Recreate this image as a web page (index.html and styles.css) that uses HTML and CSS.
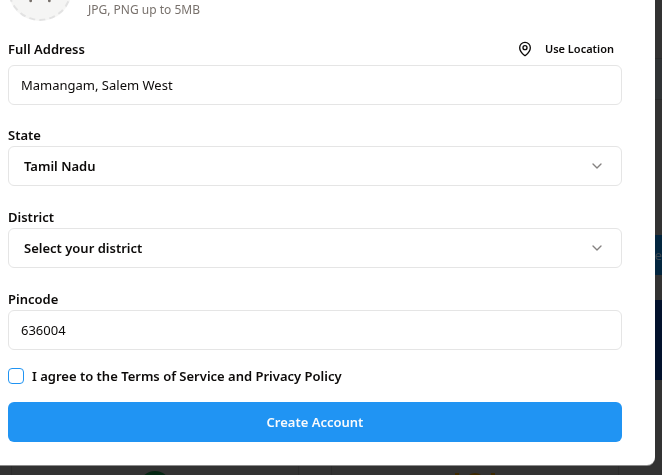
FILE: index.html
```html
<!DOCTYPE html>
<html lang="en">
<head>
<meta charset="utf-8">
<meta name="viewport" content="width=device-width, initial-scale=1">
<title>Create Account</title>
<link rel="stylesheet" href="styles.css">
</head>
<body>
<div class="page" aria-hidden="true">
  <div class="page-rules"></div>
  <div class="page-search">e</div>
  <div class="page-banner"></div>
  <div class="page-strip">
    <div class="card"><span class="dot"></span></div>
    <div class="card"><span class="spark"></span><span class="badge"></span><span class="spark"></span></div>
  </div>
</div>
<div class="overlay">
  <form class="dialog" role="dialog" aria-label="Create Account">
    <div class="photo">
      <div class="avatar">
        <svg width="32" height="32" viewBox="0 0 24 24" fill="none" stroke="currentColor" stroke-width="2" stroke-linecap="round" stroke-linejoin="round"><path d="M19 21v-2a4 4 0 0 0-4-4H9a4 4 0 0 0-4 4v2"/><circle cx="12" cy="7" r="4"/></svg>
      </div>
      <p class="hint">JPG, PNG up to 5MB</p>
    </div>
    <div class="field address">
      <div class="field-head">
        <label for="address">Full Address</label>
        <button type="button" class="locate">
          <svg width="16" height="16" viewBox="0 0 24 24" fill="none" stroke="currentColor" stroke-width="2" stroke-linecap="round" stroke-linejoin="round"><path d="M20 10c0 5-5.500 10.200-7.400 11.800a1 1 0 0 1-1.200 0C9.500 20.200 4 15 4 10a8 8 0 0 1 16 0"/><circle cx="12" cy="10" r="3"/></svg>
          Use Location
        </button>
      </div>
      <input class="control" id="address" type="text" value="Mamangam, Salem West">
    </div>
    <div class="field">
      <label for="state">State</label>
      <div class="select">
        <select class="control" id="state"><option>Tamil Nadu</option></select>
        <svg width="16" height="16" viewBox="0 0 24 24" fill="none" stroke="currentColor" stroke-width="2" stroke-linecap="round" stroke-linejoin="round"><path d="m6 9 6 6 6-6"/></svg>
      </div>
    </div>
    <div class="field">
      <label for="district">District</label>
      <div class="select">
        <select class="control" id="district"><option>Select your district</option></select>
        <svg width="16" height="16" viewBox="0 0 24 24" fill="none" stroke="currentColor" stroke-width="2" stroke-linecap="round" stroke-linejoin="round"><path d="m6 9 6 6 6-6"/></svg>
      </div>
    </div>
    <div class="field">
      <label for="pincode">Pincode</label>
      <input class="control" id="pincode" type="text" inputmode="numeric" value="636004">
    </div>
    <div class="terms">
      <input id="terms" type="checkbox">
      <label for="terms">I agree to the Terms of Service and Privacy Policy</label>
    </div>
    <button type="submit" class="submit">Create Account</button>
  </form>
</div>
</body>
</html>
```
FILE: styles.css
```css
* {
  box-sizing: border-box;
}

body {
  margin: 0;
  background: #323232;
  color: #0c0a09;
  font: 13px/20px "Segoe UI", "Noto Sans", sans-serif;
  overflow: hidden;
}

button,
input,
select {
  margin: 0;
  font: inherit;
  color: inherit;
}

/* Dimmed page behind the dialog */
.page {
  position: fixed;
  inset: 0;
}

.page-rules,
.page-search,
.page-banner {
  position: absolute;
  right: 0;
  width: 16px;
}

.page-rules {
  top: 58px;
  height: 42px;
  border: solid #2a2b2c;
  border-width: 1px 0;
  background: #303335;
}

.page-search {
  top: 235px;
  height: 40px;
  background: #03263f;
  color: #3c464e;
  line-height: 40px;
  text-align: right;
}

.page-banner {
  top: 300px;
  height: 80px;
  background: #03122d;
}

.page-strip {
  position: absolute;
  inset: auto 0 0;
  display: grid;
  grid-template-columns: 1fr 1fr;
  gap: 32px;
  height: 10px;
  padding: 0 43px 0 11px;
  overflow: hidden;
}

.card {
  display: flex;
  justify-content: center;
  height: 64px;
  border: solid #2c2c2c;
  border-width: 0 1px;
}

.dot {
  width: 32px;
  height: 32px;
  margin-top: 6px;
  border-radius: 50%;
  background: #052713;
}

.badge {
  width: 20px;
  height: 20px;
  margin: 8px 6px 0;
  border-radius: 50%;
  background: #3d2900;
}

.spark {
  width: 4px;
  height: 4px;
  margin-top: 8px;
  background: #3d2900;
}

/* Dialog, scrolled to its end */
.overlay {
  position: fixed;
  inset: 0;
  display: flex;
  align-items: flex-end;
  padding: 0 7px 10px 0;
}

.dialog {
  flex: 1;
  display: flex;
  flex-direction: column;
  gap: 20px;
  padding: 24px 33px 23px 8px;
  background: #fff;
  border-radius: 0 0 8px 0;
  box-shadow: 0 1px 0 #8c8c8c;
}

.photo {
  display: flex;
  align-items: center;
  gap: 16px;
  margin-bottom: -8px;
}

.avatar {
  display: grid;
  place-items: center;
  width: 64px;
  height: 64px;
  border: 2px dashed #e2e2e2;
  border-radius: 50%;
  background: #f5f5f4;
  color: #78716c;
}

.hint {
  margin: 0;
  padding-top: 42px;
  color: #78716c;
  font-size: 12px;
}

.field {
  display: flex;
  flex-direction: column;
}

.address {
  margin-bottom: -1px;
}

label {
  font-weight: 600;
  line-height: 22px;
}

.field-head {
  display: flex;
  align-items: center;
  justify-content: space-between;
  height: 32px;
}

.locate {
  display: flex;
  align-items: center;
  gap: 12px;
  padding: 0 8px;
  border: 0;
  background: none;
  font-size: 11px;
  font-weight: 600;
}

.control {
  width: 100%;
  height: 40px;
  padding: 0 12px;
  border: 1px solid #e5e5e5;
  border-radius: 6px;
  background: #fff;
}

.select {
  position: relative;
}

.select .control {
  display: block;
  padding: 0 40px 0 15px;
  appearance: none;
  font-weight: 600;
}

.select svg {
  position: absolute;
  top: 12px;
  right: 17px;
  color: #858281;
  pointer-events: none;
}

.terms {
  display: flex;
  align-items: center;
  gap: 8px;
  height: 16px;
  margin: -2px 0;
}

.terms input {
  width: 16px;
  height: 16px;
  border: 1px solid #2094f3;
  border-radius: 4px;
  appearance: none;
}

.submit {
  height: 40px;
  border: 0;
  border-radius: 6px;
  background: #2094f3;
  color: #f8fafc;
  font-weight: 600;
}
```
